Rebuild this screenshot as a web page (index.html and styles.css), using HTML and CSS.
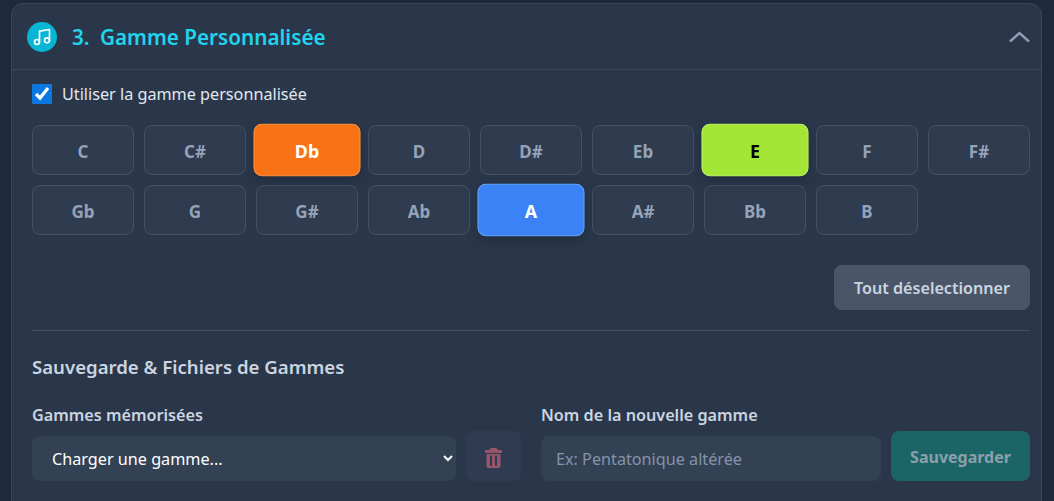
FILE: index.html
```html
<!DOCTYPE html>
<html lang="fr">
<head>
    <meta charset="utf-8">
    <title>Gamme Personnalisée</title>
    <link rel="stylesheet" href="styles.css">
</head>
<body>
    <section class="card">
        <header class="card-header">
            <div class="card-title">
                <span class="title-icon">
                    <svg width="20" height="20" viewBox="0 0 24 24" fill="none" stroke="#fff" stroke-width="2" stroke-linecap="round" stroke-linejoin="round">
                        <path d="M9 18V5l12-2v13"/>
                        <circle cx="6" cy="18" r="3"/>
                        <circle cx="18" cy="16" r="3"/>
                    </svg>
                </span>
                <h2><span class="title-num">3.</span> Gamme Personnalisée</h2>
            </div>
            <svg class="chevron" width="22" height="12" viewBox="0 0 22 12" fill="none" stroke="#8f9db3" stroke-width="2.4">
                <path d="M2 10.500 11.500 2l9.500 8.500"/>
            </svg>
        </header>
        <div class="card-body">
            <label class="check-row">
                <input type="checkbox" checked>
                <span>Utiliser la gamme personnalisée</span>
            </label>
            <div class="note-grid">
                <button class="note">C</button>
                <button class="note">C#</button>
                <button class="note note-orange">Db</button>
                <button class="note">D</button>
                <button class="note">D#</button>
                <button class="note">Eb</button>
                <button class="note note-lime">E</button>
                <button class="note">F</button>
                <button class="note">F#</button>
                <button class="note">Gb</button>
                <button class="note">G</button>
                <button class="note">G#</button>
                <button class="note">Ab</button>
                <button class="note note-blue">A</button>
                <button class="note">A#</button>
                <button class="note">Bb</button>
                <button class="note">B</button>
            </div>
            <div class="clear-row">
                <button class="btn-clear">Tout déselectionner</button>
            </div>
            <div class="save-section">
                <h3>Sauvegarde &amp; Fichiers de Gammes</h3>
                <div class="save-grid">
                    <div>
                        <label class="field-label">Gammes mémorisées</label>
                        <div class="field-row">
                            <select class="field">
                                <option>Charger une gamme...</option>
                            </select>
                            <button class="btn-delete" disabled>
                                <svg width="17" height="20" viewBox="0 0 17 20" fill="#fb7185">
                                    <path fill-rule="evenodd" d="M6 0h5c.6 0 1 .4 1.200 1l.3 1H16c.6 0 1 .4 1 1v1c0 .6-.4 1-1 1H1C.4 5 0 4.600 0 4V3c0-.6.4-1 1-1h3.500l.3-1C5 .4 5.400 0 6 0zM1.500 6h14v12c0 1.100-.9 2-2 2h-10c-1.100 0-2-.9-2-2V6zM5 8.500V17c0 .6.400 1 1 1s1-.4 1-1V8.500c0-.6-.4-1-1-1s-1 .4-1 1zm5 0V17c0 .6.400 1 1 1s1-.4 1-1V8.500c0-.6-.4-1-1-1s-1 .4-1 1z"/>
                                </svg>
                            </button>
                        </div>
                    </div>
                    <div>
                        <label class="field-label">Nom de la nouvelle gamme</label>
                        <div class="field-row">
                            <input class="field" type="text" placeholder="Ex: Pentatonique altérée">
                            <button class="btn-save" disabled>Sauvegarder</button>
                        </div>
                    </div>
                </div>
            </div>
        </div>
    </section>
</body>
</html>
```

FILE: styles.css
```css
* {
    box-sizing: border-box;
}
body {
    margin: 0;
    padding: 3px 11px 0 11px;
    height: 501px;
    overflow: hidden;
    background: #1e293b;
    font-family: "Noto Sans", sans-serif;
    color: #e2e8f0;
}
.card {
    width: 1031px;
    background: #2a374b;
    border: 1px solid #3a4659;
    border-radius: 12px;
}
.card-header {
    display: flex;
    align-items: center;
    justify-content: space-between;
    height: 66px;
    padding: 0 11px 0 15px;
    border-bottom: 1px solid #3a4659;
}
.card-title {
    display: flex;
    align-items: center;
    gap: 15px;
}
.title-icon {
    display: flex;
    align-items: center;
    justify-content: center;
    width: 30px;
    height: 30px;
    border-radius: 50%;
    background: #06b6d4;
}
.card-title h2 {
    margin: 0;
    font-size: 20.700px;
    font-weight: 600;
    color: #22d3ee;
}
.title-num {
    margin-right: 5px;
}
.card-body {
    padding: 13px 11px 40px 20px;
}
.check-row {
    display: flex;
    align-items: center;
    gap: 10px;
    height: 22px;
    font-size: 16.200px;
    color: #e2e8f0;
}
.check-row input {
    width: 20px;
    height: 20px;
    margin: 0;
    accent-color: #0a78e0;
}
.note-grid {
    display: grid;
    grid-template-columns: repeat(9, 102px);
    gap: 10px;
    margin-top: 20px;
}
.note {
    height: 50px;
    padding: 2px 0 0;
    background: #2f3b4f;
    border: 1px solid #445065;
    border-radius: 8px;
    font-family: inherit;
    font-size: 17px;
    font-weight: 700;
    color: #94a3b8;
}
.note-orange,
.note-lime,
.note-blue {
    transform: scale(1.05);
    box-shadow: 0 4px 12px rgba(0, 0, 0, 0.2);
}
.note-orange {
    background: #f97316;
    border-color: #fb923c;
    color: #fff;
}
.note-lime {
    background: #a3e635;
    border-color: #bef264;
    color: #000;
}
.note-blue {
    background: #3b82f6;
    border-color: #60a5fa;
    color: #fff;
}
.clear-row {
    display: flex;
    justify-content: flex-end;
    margin-top: 30px;
    padding-bottom: 20px;
    border-bottom: 1px solid #445065;
}
.btn-clear {
    height: 45px;
    width: 196px;
    padding: 0;
    background: #4a5568;
    border: none;
    border-radius: 8px;
    font-family: inherit;
    font-size: 16.100px;
    font-weight: 600;
    color: #cbd5e0;
}
.save-section {
    padding-top: 23px;
}
.save-section h3 {
    margin: 0;
    font-size: 18.600px;
    line-height: 25px;
    font-weight: 600;
    color: #cbd5e0;
}
.save-grid {
    display: grid;
    grid-template-columns: 1fr 1fr;
    gap: 20px;
    margin-top: 25px;
}
.field-label {
    display: block;
    font-size: 16.200px;
    line-height: 22px;
    font-weight: 600;
    color: #cbd5e0;
}
.field-row {
    display: flex;
    align-items: flex-end;
    gap: 10px;
    margin-top: 5px;
}
.field {
    flex: 1;
    min-width: 0;
    height: 45px;
    background: #334155;
    border: none;
    border-radius: 8px;
    font-family: inherit;
    font-size: 16.200px;
    color: #e2e8f0;
}
select.field {
    padding: 0 10px 0 16px;
    color: #fff;
}
input.field {
    padding: 0 15px;
}
input.field::placeholder {
    color: #8593a8;
}
.btn-delete {
    display: flex;
    align-items: center;
    justify-content: center;
    width: 55px;
    height: 50px;
    padding: 3px 0 0;
    background: #2f3b50;
    border: none;
    border-radius: 8px;
}
.btn-delete svg {
    opacity: 0.5;
}
.btn-save {
    width: 139px;
    height: 50px;
    padding: 2px 0 0;
    background: #1b6567;
    border: none;
    border-radius: 8px;
    font-family: inherit;
    font-size: 16px;
    font-weight: 700;
    color: #8ba0ac;
}
```
